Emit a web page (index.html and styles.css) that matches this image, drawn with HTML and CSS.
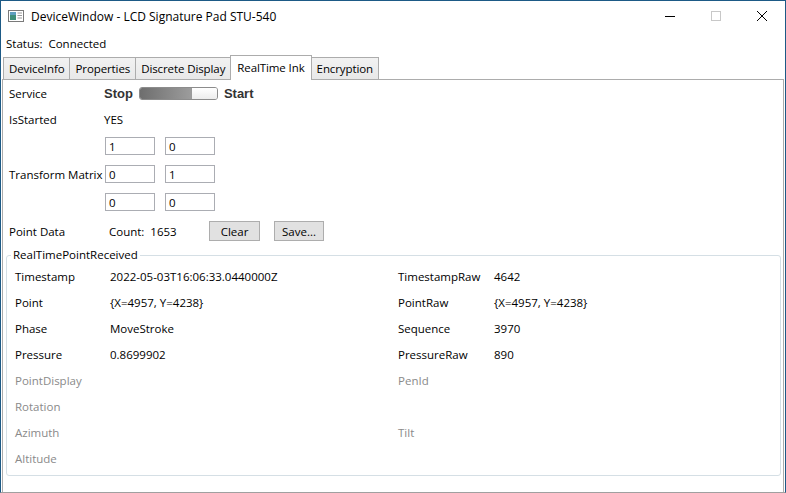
FILE: index.html
```html
<!DOCTYPE html>
<html>
<head>
<meta charset="utf-8">
<link rel="stylesheet" href="styles.css">
</head>
<body>
<div class="window">
  <div class="titlebar">
    <svg class="appicon" width="16" height="14" viewBox="0 0 16 14">
      <rect x="0.5" y="1.5" width="15" height="11" fill="#fff" stroke="#7a7a7a"/>
      <rect x="2" y="3" width="6" height="8" fill="#3f8f7a"/>
      <rect x="2" y="3" width="6" height="3" fill="#5f9fc0"/>
      <rect x="9.5" y="3.5" width="4.5" height="1" fill="#9a9a9a"/>
      <rect x="9.5" y="6" width="4.5" height="1" fill="#9a9a9a"/>
      <rect x="9.5" y="8.5" width="4.5" height="1" fill="#9a9a9a"/>
    </svg>
    <span class="title">DeviceWindow - LCD Signature Pad STU-540</span>
    <div class="controls">
      <span class="ctl"><svg width="10" height="10" viewBox="0 0 10 10"><line x1="0" y1="5.5" x2="10" y2="5.5" stroke="#000" stroke-width="1"/></svg></span>
      <span class="ctl"><svg width="10" height="10" viewBox="0 0 10 10"><rect x="0.5" y="0.5" width="9" height="9" fill="none" stroke="#c8c8c8"/></svg></span>
      <span class="ctl"><svg width="10" height="10" viewBox="0 0 10 10"><path d="M0 0L10 10M10 0L0 10" stroke="#000" stroke-width="1"/></svg></span>
    </div>
  </div>
  <div class="status">Status:&nbsp; Connected</div>
  <div class="tabs">
    <div class="tab">DeviceInfo</div>
    <div class="tab">Properties</div>
    <div class="tab">Discrete Display</div>
    <div class="tab active">RealTime Ink</div>
    <div class="tab">Encryption</div>
  </div>
  <div class="panel">
    <div class="form">
      <div class="lbl r-service">Service</div>
      <div class="service">
        <span class="bold">Stop</span>
        <span class="toggle"><span class="fill"></span><span class="thumb"></span></span>
        <span class="bold">Start</span>
      </div>
      <div class="lbl">IsStarted</div>
      <div class="val">YES</div>
      <div class="lbl"></div>
      <div class="boxes"><span class="tb">1</span><span class="tb">0</span></div>
      <div class="lbl">Transform Matrix</div>
      <div class="boxes"><span class="tb">0</span><span class="tb">1</span></div>
      <div class="lbl"></div>
      <div class="boxes"><span class="tb">0</span><span class="tb">0</span></div>
      <div class="lbl r-point">Point Data</div>
      <div class="pointdata">
        <span class="count">Count:&nbsp; 1653</span>
        <span class="btn clear">Clear</span>
        <span class="btn save">Save...</span>
      </div>
    </div>
    <fieldset class="group">
      <legend>RealTimePointReceived</legend>
      <div class="grid">
        <div>Timestamp</div><div>2022-05-03T16:06:33.0440000Z</div><div>TimestampRaw</div><div>4642</div>
        <div>Point</div><div>{X=4957, Y=4238}</div><div>PointRaw</div><div>{X=4957, Y=4238}</div>
        <div>Phase</div><div>MoveStroke</div><div>Sequence</div><div>3970</div>
        <div>Pressure</div><div>0.8699902</div><div>PressureRaw</div><div>890</div>
        <div class="dim">PointDisplay</div><div></div><div class="dim">PenId</div><div></div>
        <div class="dim">Rotation</div><div></div><div></div><div></div>
        <div class="dim">Azimuth</div><div></div><div class="dim">Tilt</div><div></div>
        <div class="dim">Altitude</div><div></div><div></div><div></div>
      </div>
    </fieldset>
  </div>
</div>
</body>
</html>
```
FILE: styles.css
```css
* { box-sizing: border-box; }
html, body { margin: 0; padding: 0; background: #fff; }
body {
  font-family: "Open Sans", "Noto Sans", sans-serif;
  font-size: 11.5px;
  color: #000;
}
.window {
  width: 786px;
  height: 493px;
  border: 1px solid #1d5a86;
  border-bottom: 1px solid #a0a0a0;
  display: flex;
  flex-direction: column;
  background: #fff;
}
.titlebar {
  height: 29px;
  display: flex;
  align-items: center;
  padding-left: 7px;
}
.appicon { margin-right: 7px; margin-top: 1px; }
.title { font-size: 12px; margin-top: 1px; }
.controls { margin-left: auto; display: flex; height: 29px; }
.ctl {
  width: 46px;
  display: flex;
  align-items: center;
  justify-content: center;
}
.status {
  height: 26px;
  padding-left: 5px;
  display: flex;
  align-items: center;
}
.tabs {
  height: 23px;
  display: flex;
  align-items: flex-end;
  padding-left: 2px;
  position: relative;
  z-index: 1;
  letter-spacing: -0.1px;
}
.tab {
  height: 22px;
  padding: 0 5px;
  border: 1px solid #acacac;
  border-right: none;
  border-bottom: none;
  background: linear-gradient(#f2f2f2, #e8e8e8);
  display: flex;
  align-items: center;
}
.tab:last-child { border-right: 1px solid #acacac; }
.tab.active {
  height: 25px;
  margin-bottom: -1px;
  background: #fff;
  padding: 0 6px 2px;
  border-right: 1px solid #acacac;
  margin-right: -1px;
  position: relative;
}
.panel {
  flex: 1;
  margin: 0 1px 0 1px;
  border: 1px solid #acacac;
  border-bottom: none;
  display: flex;
  flex-direction: column;
}
.form {
  display: grid;
  grid-template-columns: 95px 1fr;
  grid-template-rows: 26px 26px 28px 28px 28px 30px;
  padding: 0 0 0 6px;
  align-items: center;
}
.lbl { white-space: nowrap; }
.service { display: flex; align-items: center; }
.bold {
  font-family: "Liberation Sans", Arial, sans-serif;
  font-weight: bold;
  font-size: 13px;
  color: #333;
}
.toggle {
  width: 79px;
  height: 13px;
  margin: 0 6px 0 6px;
  border: 1px solid #8c8c8c;
  border-radius: 3px;
  display: flex;
  overflow: hidden;
  background: #fafafa;
}
.fill {
  width: 51px;
  background: linear-gradient(90deg, #6e6e6e, #9c9c9c);
}
.thumb {
  flex: 1;
  background: linear-gradient(#ffffff, #ececec);
  border-left: 1px solid #9a9a9a;
}
.boxes { display: flex; gap: 10px; padding-left: 1px; }
.tb {
  width: 50px;
  height: 18px;
  border: 1px solid #abadb3;
  padding-left: 3px;
  display: flex;
  align-items: center;
}
.pointdata { display: flex; align-items: center; }
.count { width: 105px; padding-left: 5px; }
.btn {
  height: 20px;
  border: 1px solid #adadad;
  background: #e1e1e1;
  display: flex;
  align-items: center;
  justify-content: center;
}
.clear { width: 51px; }
.save { width: 50px; margin-left: 14px; }
.group {
  margin: 1px 2px 0 3px;
  padding: 0 4px 3px 8px;
  border: 1px solid #d5dfe5;
  border-radius: 3px;
  height: 229px;
}
.group legend {
  padding: 0 2px;
  margin-left: -4px;
  line-height: 16px;
}
.grid {
  display: grid;
  grid-template-columns: 95px 288px 96px 1fr;
  grid-auto-rows: 26px;
  align-items: center;
}
.dim { color: #8a8a8a; }
```
